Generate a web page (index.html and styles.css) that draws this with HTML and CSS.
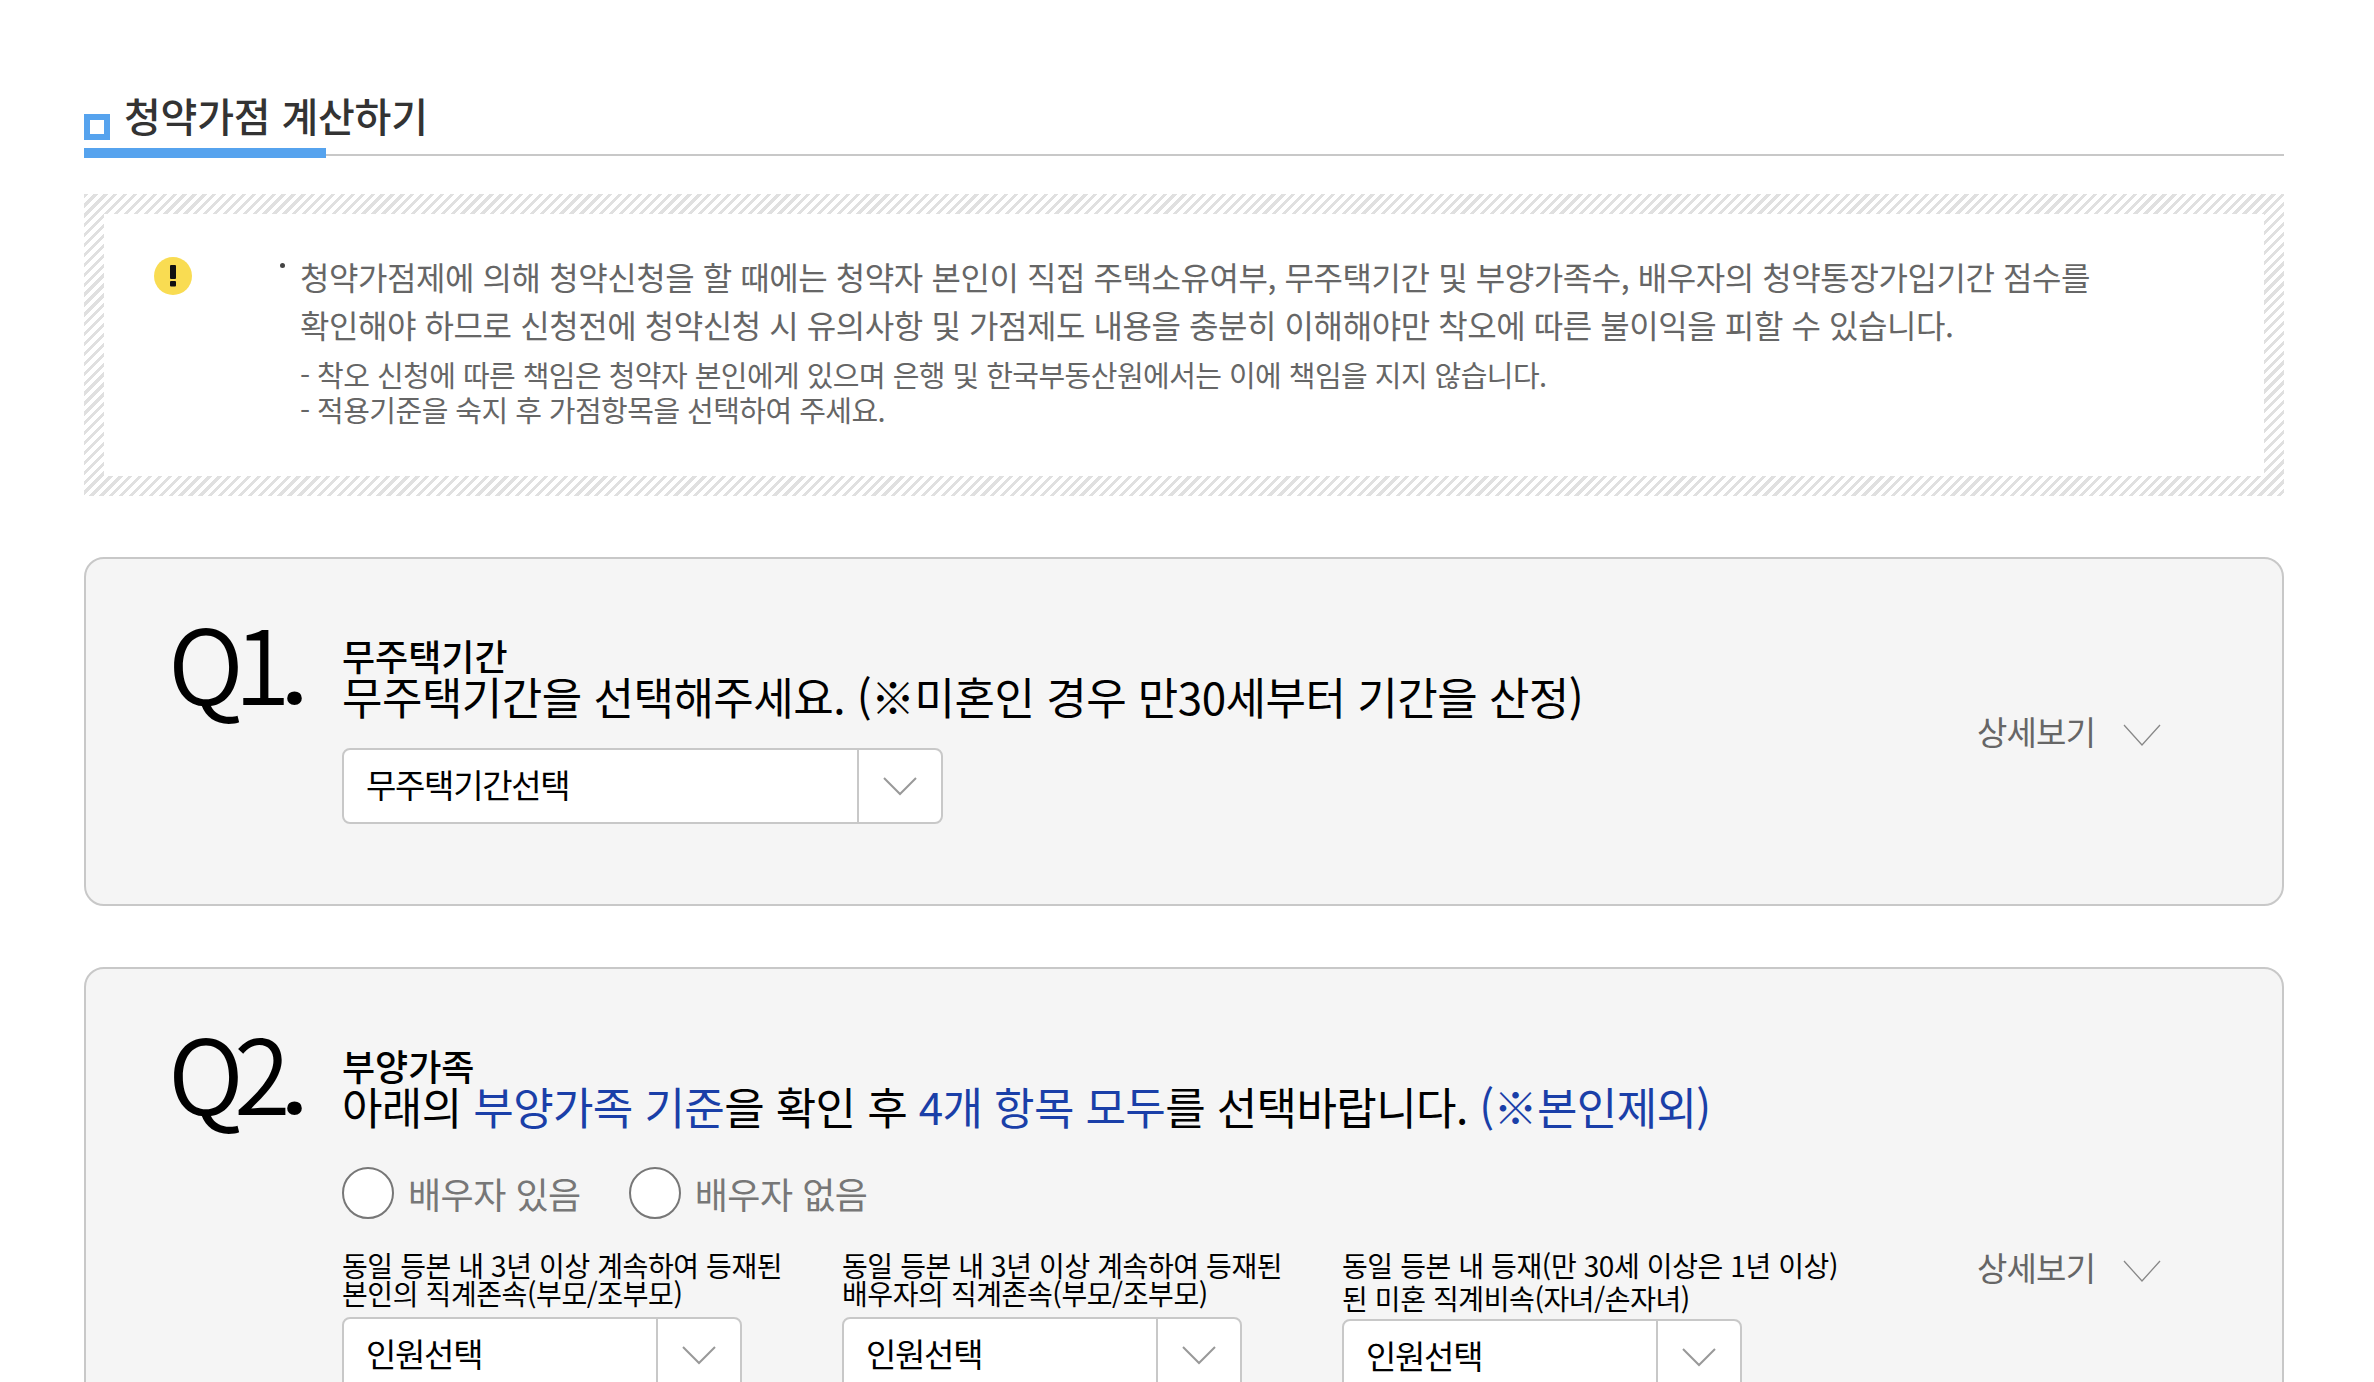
FILE: index.html
```html
<!DOCTYPE html>
<html lang="ko">
<head>
<meta charset="utf-8">
<title>청약가점 계산하기</title>
<link rel="stylesheet" href="styles.css">
</head>
<body>
<main class="page">
  <header class="heading">
    <span class="bullet"></span>
    <h1 class="heading-text">청약가점 계산하기</h1>
  </header>

  <section class="notice">
    <div class="notice-inner">
      <svg class="notice-icon" width="38" height="38" viewBox="0 0 38 38" aria-hidden="true">
        <circle cx="19" cy="19" r="19" fill="#f9dc52"/>
        <rect x="16" y="8" width="6" height="14" rx="1" fill="#111"/>
        <rect x="16" y="24" width="6" height="5.5" rx="1" fill="#111"/>
      </svg>
      <div class="notice-body">
        <p class="notice-main">청약가점제에 의해 청약신청을 할 때에는 청약자 본인이 직접 주택소유여부, 무주택기간 및 부양가족수, 배우자의 청약통장가입기간 점수를<br>확인해야 하므로 신청전에 청약신청 시 유의사항 및 가점제도 내용을 충분히 이해해야만 착오에 따른 불이익을 피할 수 있습니다.</p>
        <p class="notice-sub">- 착오 신청에 따른 책임은 청약자 본인에게 있으며 은행 및 한국부동산원에서는 이에 책임을 지지 않습니다.<br>- 적용기준을 숙지 후 가점항목을 선택하여 주세요.</p>
      </div>
    </div>
  </section>

  <section class="card card-q1">
    <div class="q-mark">Q1<span class="q-dot">.</span></div>
    <div class="q-body">
      <h2 class="q-title">무주택기간</h2>
      <p class="q-text">무주택기간을 선택해주세요. (※미혼인 경우 만30세부터 기간을 산정)</p>
      <div class="select select-wide">
        <span class="select-label">무주택기간선택</span>
        <span class="select-arrow"><svg width="34" height="20" viewBox="0 0 34 20"><polyline points="1,2 17,18 33,2" fill="none" stroke="#999" stroke-width="2"/></svg></span>
      </div>
    </div>
    <div class="more more-q1">
      <span class="more-text">상세보기</span>
      <svg class="more-icon" width="38" height="22" viewBox="0 0 38 22"><polyline points="1,1 19,21 37,1" fill="none" stroke="#888" stroke-width="1.3"/></svg>
    </div>
  </section>

  <section class="card card-q2">
    <div class="q-mark">Q2<span class="q-dot">.</span></div>
    <div class="q-body">
      <h2 class="q-title">부양가족</h2>
      <p class="q-text">아래의 <span class="blue">부양가족 기준</span>을 확인 후 <span class="blue">4개 항목 모두</span>를 선택바랍니다. <span class="blue">(※본인제외)</span></p>
      <div class="radios">
        <label class="radio"><span class="radio-circle"></span>배우자 있음</label>
        <label class="radio"><span class="radio-circle"></span>배우자 없음</label>
      </div>
      <div class="cols">
        <div class="col">
          <p class="col-label">동일 등본 내 3년 이상 계속하여 등재된<br>본인의 직계존속(부모/조부모)</p>
          <div class="select select-a">
            <span class="select-label">인원선택</span>
            <span class="select-arrow"><svg width="34" height="20" viewBox="0 0 34 20"><polyline points="1,2 17,18 33,2" fill="none" stroke="#999" stroke-width="2"/></svg></span>
          </div>
        </div>
        <div class="col">
          <p class="col-label">동일 등본 내 3년 이상 계속하여 등재된<br>배우자의 직계존속(부모/조부모)</p>
          <div class="select select-a">
            <span class="select-label">인원선택</span>
            <span class="select-arrow"><svg width="34" height="20" viewBox="0 0 34 20"><polyline points="1,2 17,18 33,2" fill="none" stroke="#999" stroke-width="2"/></svg></span>
          </div>
        </div>
        <div class="col">
          <p class="col-label col-label-loose">동일 등본 내 등재(만 30세 이상은 1년 이상)<br>된 미혼 직계비속(자녀/손자녀)</p>
          <div class="select select-a">
            <span class="select-label">인원선택</span>
            <span class="select-arrow"><svg width="34" height="20" viewBox="0 0 34 20"><polyline points="1,2 17,18 33,2" fill="none" stroke="#999" stroke-width="2"/></svg></span>
          </div>
        </div>
      </div>
    </div>
    <div class="more more-q2">
      <span class="more-text">상세보기</span>
      <svg class="more-icon" width="38" height="22" viewBox="0 0 38 22"><polyline points="1,1 19,21 37,1" fill="none" stroke="#888" stroke-width="1.3"/></svg>
    </div>
  </section>
</main>
</body>
</html>
```
FILE: styles.css
```css
* { box-sizing: border-box; }
html, body { margin: 0; padding: 0; height: 1382px; overflow: hidden; background: #fff; }
body { font-family: "Noto Sans CJK KR", "Noto Sans", sans-serif; color: #000; }
p, h1, h2 { margin: 0; font-weight: 400; }

.page { padding: 90px 90px 0 84px; }

.heading { position: relative; display: flex; align-items: flex-end; height: 66px; border-bottom: 2px solid #c8c8c8; }
.heading::after { content: ""; position: absolute; left: 0; bottom: -4px; width: 242px; height: 10px; background: #56a3ee; }
.bullet { width: 26px; height: 26px; border: 6px solid #56a3ee; background: #fff; margin-bottom: 14px; }
.heading-text { margin-left: 14px; padding-bottom: 10px; font-size: 40px; line-height: 58px; font-weight: 500; color: #333; letter-spacing: -0.2px; }

.notice { margin-top: 38px; padding: 20px; background: repeating-linear-gradient(135deg, #e0e0e0 0 3px, #fff 3px 7px); }
.notice-inner { display: flex; background: #fff; height: 262px; padding: 38px 0 0 50px; }
.notice-icon { flex: none; margin-top: 5px; }
.notice-body { margin-left: 108px; position: relative; }
.notice-body::before { content: ""; position: absolute; left: -20px; top: 11px; width: 5px; height: 5px; border-radius: 50%; background: #444; }
.notice-main { font-size: 32px; line-height: 48px; color: #666; letter-spacing: -0.43px; white-space: nowrap; }
.notice-sub { margin-top: 9px; font-size: 29px; line-height: 35px; color: #666; letter-spacing: -0.55px; white-space: nowrap; }

.card { display: flex; margin-top: 61px; background: #f5f5f5; border: 2px solid #c8c8c8; border-radius: 20px; padding-left: 82px; }
.card-q1 { height: 349px; }
.card-q2 { margin-top: 61px; height: 800px; }
.q-mark { flex: none; width: 174px; padding-top: 44px; font-size: 103px; font-weight: 350; line-height: 116px; letter-spacing: -10px; color: #000; white-space: nowrap; }
.q-dot { font-family: Roboto, sans-serif; font-size: 92px; font-weight: 700; letter-spacing: 0; margin-left: 1px; }
.q-body { flex: none; width: 1550px; padding-top: 76px; }
.q-title { font-size: 36px; line-height: 41px; font-weight: 500; letter-spacing: 0; }
.q-text { font-size: 44px; line-height: 41px; letter-spacing: -0.53px; white-space: nowrap; }
.card-q2 .q-text { letter-spacing: -0.62px; }
.blue { color: #1a3fa8; }

.select { display: flex; background: #fff; border: 2px solid #c8c8c8; border-radius: 8px; height: 76px; }
.select-wide { margin-top: 31px; width: 601px; }
.select-a { width: 400px; margin-top: 10px; }
.select-label { flex: 1; padding-left: 22px; font-size: 33px; line-height: 69px; letter-spacing: -1.3px; }
.select-arrow { flex: none; width: 84px; display: flex; align-items: center; justify-content: center; border-left: 2px solid #c8c8c8; }

.more { display: flex; align-items: center; gap: 28px; margin-left: 85px; height: 46px; }
.more-q1 { margin-top: 149px; }
.more-q2 { margin-top: 275px; }
.more-text { font-size: 33px; line-height: 46px; color: #666; letter-spacing: -0.8px; }
.more-icon { margin-top: 7px; }

.radios { display: flex; gap: 48px; margin-top: 38px; height: 56px; align-items: center; }
.radio { display: flex; align-items: center; gap: 14px; font-size: 36px; color: #777; letter-spacing: -0.5px; }
.radio-circle { display: block; width: 52px; height: 52px; border-radius: 50%; background: #fff; border: 2px solid #777; }

.cols { display: flex; margin-top: 30px; }
.col { width: 500px; }
.col-label { height: 56px; font-size: 28px; line-height: 28px; letter-spacing: -0.4px; white-space: nowrap; }
.col-label-loose { line-height: 33px; height: 60px; margin-top: -2px; }
```
